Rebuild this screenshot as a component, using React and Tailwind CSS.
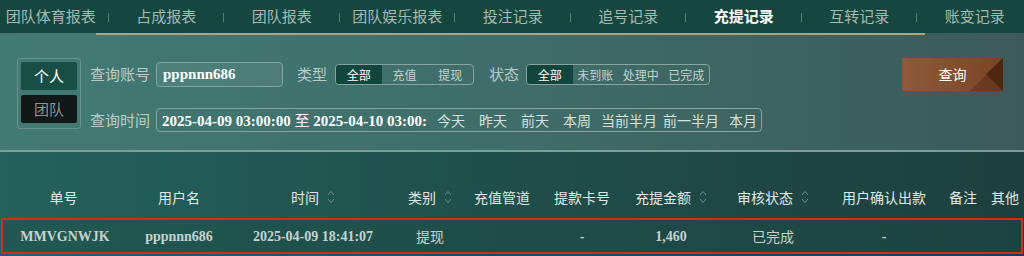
import React from "react";

const CJK = "font-['Noto_Sans_CJK_SC',sans-serif]";
const SERIF = "font-['Liberation_Serif','Noto_Sans_CJK_SC',serif] font-bold";

const tabs = ["团队体育报表", "占成报表", "团队报表", "团队娱乐报表", "投注记录", "追号记录", "充提记录", "互转记录", "账变记录"];

function Sort() {
  return (
    <svg width="8" height="16" viewBox="0 0 8 16" fill="none" stroke="#6f8e89" strokeWidth="1">
      <path d="M1 6 L4 2.5 L7 6" />
      <path d="M1 10 L4 13.5 L7 10" />
    </svg>
  );
}

const cols = [127, 104, 164, 70, 74, 86, 92, 112, 110, 48, 36];

const header = [
  { t: "单号" },
  { t: "用户名" },
  { t: "时间", s: true },
  { t: "类别", s: true },
  { t: "充值管道" },
  { t: "提款卡号" },
  { t: "充提金额", s: true },
  { t: "审核状态", s: true },
  { t: "用户确认出款" },
  { t: "备注" },
  { t: "其他" },
];

const row = [
  { t: "MMVGNWJK", f: SERIF },
  { t: "pppnnn686", f: SERIF },
  { t: "2025-04-09 18:41:07", f: SERIF },
  { t: "提现", f: CJK },
  { t: "", f: CJK },
  { t: "-", f: SERIF },
  { t: "1,460", f: SERIF },
  { t: "已完成", f: CJK },
  { t: "-", f: SERIF },
  { t: "", f: CJK },
  { t: "", f: CJK },
];

function Seg({ items, w }) {
  return (
    <div className="flex h-[21px] border border-[#86a5a1] rounded-[4px] overflow-hidden">
      {items.map((it, i) => (
        <div
          key={it}
          className={
            "flex items-center justify-center text-[12px] " +
            (i === 0 ? "bg-[#12463d] text-white" : "text-[#c3d2ce]")
          }
          style={{ width: w }}
        >
          {it}
        </div>
      ))}
    </div>
  );
}

export default function App() {
  return (
    <div className={"w-[1024px] h-[256px] overflow-hidden bg-[#1e4443] " + CJK}>
      {/* Tabs */}
      <div className="flex h-[33px] bg-[#16473f] overflow-hidden">
        <div className="flex ml-[-7px]">
          {tabs.map((t, i) => (
            <div
              key={t}
              className={
                "relative w-[115.5px] shrink-0 flex items-center justify-center text-[15px] " +
                (i === 6 ? "text-white font-bold" : "text-[#a6bab5]")
              }
            >
              {t}
              {i < 8 && <span className="absolute right-0 top-[13px] h-[9px] w-px bg-[#5d7c77]" />}
            </div>
          ))}
        </div>
      </div>

      {/* Filter */}
      <div className="h-[117px] bg-linear-to-r from-[#427b74] via-[#3f6d69] to-[#3c5a59]">
        <div className="h-[2px] ml-[96px] w-[829px] bg-[#b4a27b]" />
        <div className="flex pt-[23px] pl-[17px] pr-[21px]">
          <div className="w-[64px] h-[71px] border border-[#6b928d] rounded-[3px] p-[3px] flex flex-col gap-[5px]">
            <div className="h-[28px] bg-[#184e45] rounded-[2px] flex items-center justify-center text-[15px] text-white">个人</div>
            <div className="h-[28px] bg-[#111817] rounded-[2px] flex items-center justify-center text-[15px] text-[#8b9996]">团队</div>
          </div>
          <div className="ml-[9px] flex-1 flex flex-col">
            <div className="flex items-center h-[33px]">
              <span className="text-[15px] text-[#b9cdc8]">查询账号</span>
              <div className={"ml-[6px] w-[127px] h-[25px] border border-[#86a5a1] rounded-[4px] bg-[#ffffff12] px-[6px] flex items-center text-[15px] text-white " + SERIF}>
                pppnnn686
              </div>
              <span className="ml-[14px] text-[15px] text-[#b9cdc8]">类型</span>
              <div className="ml-[8px]">
                <Seg items={["全部", "充值", "提现"]} w={45.67} />
              </div>
              <span className="ml-[15px] text-[15px] text-[#b9cdc8]">状态</span>
              <div className="ml-[7px]">
                <Seg items={["全部", "未到账", "处理中", "已完成"]} w={45.5} />
              </div>
              <button className="relative ml-auto w-[101px] h-[33px] overflow-hidden bg-linear-to-r from-[#8f5a3a] to-[#7a4425] text-white text-[14px] flex items-center justify-center">
                <svg className="absolute inset-0" width="101" height="33" viewBox="0 0 101 33">
                  <polygon points="101,0 68,33 101,33" fill="#5c2d14" opacity="0.55" />
                  <polygon points="101,0 84,16 101,33" fill="#3f1b09" opacity="0.65" />
                </svg>
                <span className="relative">查询</span>
              </button>
            </div>
            <div className="flex items-center h-[24px] mt-[17px]">
              <span className="text-[15px] text-[#b9cdc8]">查询时间</span>
              <div className="ml-[6px] w-[606px] h-[24px] border border-[#86a5a1] rounded-[4px] flex items-center text-[14px] text-[#d6e1de]">
                <div className="w-[270px] h-[22px] leading-[22px] overflow-hidden whitespace-nowrap pl-[5px] text-[15px] text-white">
                  <span className={SERIF}>2025-04-09 03:00:00 </span>
                  <span className={CJK + " font-normal"}>至</span>
                  <span className={SERIF}> 2025-04-10 03:00:00</span>
                </div>
                <span className="ml-[10px]">今天</span>
                <span className="ml-[14px]">昨天</span>
                <span className="ml-[14px]">前天</span>
                <span className="ml-[14px]">本周</span>
                <span className="ml-[10px]">当前半月</span>
                <span className="ml-[6px]">前一半月</span>
                <span className="ml-[10px]">本月</span>
              </div>
            </div>
          </div>
        </div>
      </div>
      <div className="h-[2px] bg-[#7f9d9a]" />

      {/* Table */}
      <div className="h-[104px] bg-linear-to-r from-[#23625b] via-[#1f4e4a] to-[#1d3f3e] pt-[35px]">
        <div className="flex h-[20px] text-[14px] text-[#e0e8e6]">
          {header.map((h, i) => (
            <div key={h.t} className="shrink-0 flex items-center justify-center gap-[8px]" style={{ width: cols[i] }}>
              <span>{h.t}</span>
              {h.s && <Sort />}
            </div>
          ))}
        </div>
        <div className="mt-[11px] mx-[1px] h-[36px] border-2 border-[#d32b1e] flex items-center overflow-hidden bg-[#1f4a47]/40">
          {row.map((c, i) => (
            <div
              key={i}
              className={"shrink-0 text-center text-[14px] text-[#c7d2ce] whitespace-nowrap " + c.f}
              style={{ width: i === 0 ? cols[0] - 3 : cols[i] }}
            >
              {c.t}
            </div>
          ))}
        </div>
      </div>
    </div>
  );
}
